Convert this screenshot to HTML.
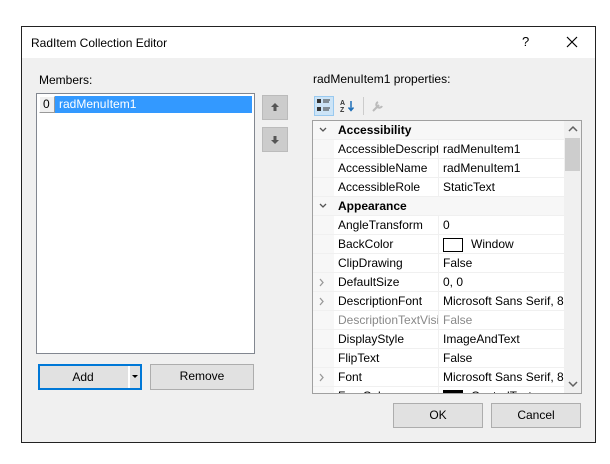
<!DOCTYPE html>
<html><head><style>
*{margin:0;padding:0;box-sizing:border-box}
body{width:610px;height:464px;background:#fff;position:relative;font-family:"Liberation Sans",sans-serif;font-size:12px;color:#000;overflow:hidden}
.a{position:absolute}
.dlg{left:21px;top:26px;width:575px;height:417px;border:1px solid #222;background:#f0f0f0}
.tb{left:0;top:0;width:573px;height:31px;background:#fff}
.btn{position:absolute;background:#e1e1e1;border:1px solid #adadad;text-align:center;line-height:23px}
.row{position:absolute;left:0;width:251px;height:19px;line-height:18px;border-bottom:1px solid #f0f0f0}
.nm{position:absolute;left:21px;width:105px;height:19px;padding-left:4px;border-right:1px solid #f0f0f0;white-space:nowrap;overflow:hidden}
.vl{position:absolute;left:126px;width:125px;padding-left:4px;white-space:nowrap;overflow:hidden}
.cat{background:#f7f7f7;font-weight:bold}
.chev{position:absolute;left:5px;top:5px}
</style></head><body>
<div class="a dlg">
 <div class="a tb"></div>
 <div class="a" style="left:9px;top:9px;font-size:12px">RadItem Collection Editor</div>
 <div class="a" style="left:500px;top:7px;font-size:13px">?</div>
 <svg class="a" style="left:544px;top:9px" width="12" height="12"><path d="M1 1L11 11M11 1L1 11" stroke="#000" stroke-width="1.2"/></svg>
 <div class="a" style="left:17px;top:46px">Members:</div>
 <div class="a" style="left:14px;top:66px;width:219px;height:261px;background:#fff;border:1px solid #828790"></div>
 <div class="a" style="left:17px;top:69px;width:16px;height:17px;background:#f0f0f0;border:1px solid #999;border-top-color:#fff;border-left-color:#fff;line-height:15px;padding-left:3px">0</div>
 <div class="a" style="left:33px;top:69px;width:197px;height:17px;background:#3399ff;color:#fff;line-height:16px;padding-left:4px">radMenuItem1</div>
 <div class="a" style="left:240px;top:68px;width:26px;height:25px;background:#ccc;border:1px solid #bbb"><svg width="24" height="23"><path d="M12 7L8 11H10.5V15H13.5V11H16Z" fill="#555"/></svg></div>
 <div class="a" style="left:240px;top:100px;width:26px;height:25px;background:#ccc;border:1px solid #bbb"><svg width="24" height="23"><path d="M12 16L8 12H10.5V8H13.5V12H16Z" fill="#555"/></svg></div>
 <div class="btn" style="left:16px;top:337px;width:104px;height:26px;border:2px solid #0078d7;line-height:22px;padding-right:14px">Add<div class="a" style="left:88px;top:0;width:2px;height:22px;background:#fff"></div><div class="a" style="left:92px;top:9px;width:0;height:0;border:3px solid transparent;border-top:3px solid #000"></div></div>
 <div class="btn" style="left:128px;top:337px;width:104px;height:26px">Remove</div>
 <div class="a" style="left:291px;top:45px">radMenuItem1 properties:</div>
 <div class="a" style="left:292px;top:69px;width:20px;height:20px;background:#cce4f7;border:1px solid #99c9ef"></div>
 <svg class="a" style="left:295px;top:72px" width="14" height="14"><rect x="0" y="0" width="4" height="4" fill="#333"/><rect x="0" y="8" width="4" height="4" fill="#333"/><path d="M6 1H13M6 3H12M6 9H13M6 11H12" stroke="#333"/></svg>
 <svg class="a" style="left:318px;top:72px" width="16" height="14"><text x="0" y="6" font-size="7" font-family="Liberation Sans" font-weight="bold" fill="#333">A</text><text x="0" y="13" font-size="7" font-family="Liberation Sans" font-weight="bold" fill="#333">Z</text><path d="M11 2V11M8.5 8.5L11 11.5L13.5 8.5" stroke="#1e6fb8" stroke-width="1.5" fill="none"/></svg>
 <div class="a" style="left:341px;top:70px;width:1px;height:18px;background:#ccc"></div>
 <svg class="a" style="left:349px;top:72px" width="14" height="14"><path d="M2 12L8 6M7 3A3 3 0 1 0 11 7" stroke="#bbb" stroke-width="2" fill="none"/></svg>
 <div class="a" style="left:290px;top:93px;width:270px;height:274px;background:#fff;border:1px solid #a0a0a0;overflow:hidden">
  <div class="a" style="left:0;top:0;width:21px;height:274px;background:#f7f7f7"></div>
  <div class="row cat" style="top:0"><svg class="chev" width="10" height="8"><path d="M2 2L5 5L8 2" stroke="#555" stroke-width="1.3" fill="none"/></svg><span class="a" style="left:25px">Accessibility</span></div>
  <div class="row" style="top:19px"><div class="nm">AccessibleDescription</div><div class="vl">radMenuItem1</div></div>
  <div class="row" style="top:38px"><div class="nm">AccessibleName</div><div class="vl">radMenuItem1</div></div>
  <div class="row" style="top:57px"><div class="nm">AccessibleRole</div><div class="vl">StaticText</div></div>
  <div class="row cat" style="top:76px"><svg class="chev" width="10" height="8"><path d="M2 2L5 5L8 2" stroke="#555" stroke-width="1.3" fill="none"/></svg><span class="a" style="left:25px">Appearance</span></div>
  <div class="row" style="top:95px"><div class="nm">AngleTransform</div><div class="vl">0</div></div>
  <div class="row" style="top:114px"><div class="nm">BackColor</div><div class="vl"><span style="display:inline-block;width:20px;height:14px;border:1px solid #000;vertical-align:middle;margin-right:8px"></span>Window</div></div>
  <div class="row" style="top:133px"><div class="nm">ClipDrawing</div><div class="vl">False</div></div>
  <div class="row" style="top:152px"><svg class="chev" width="8" height="10"><path d="M2 1L5 4.5L2 8" stroke="#999" stroke-width="1.3" fill="none"/></svg><div class="nm">DefaultSize</div><div class="vl">0, 0</div></div>
  <div class="row" style="top:171px"><svg class="chev" width="8" height="10"><path d="M2 1L5 4.5L2 8" stroke="#999" stroke-width="1.3" fill="none"/></svg><div class="nm">DescriptionFont</div><div class="vl">Microsoft Sans Serif, 8.25pt</div></div>
  <div class="row" style="top:190px;color:#888"><div class="nm">DescriptionTextVisible</div><div class="vl">False</div></div>
  <div class="row" style="top:209px"><div class="nm">DisplayStyle</div><div class="vl">ImageAndText</div></div>
  <div class="row" style="top:228px"><div class="nm">FlipText</div><div class="vl">False</div></div>
  <div class="row" style="top:247px"><svg class="chev" width="8" height="10"><path d="M2 1L5 4.5L2 8" stroke="#999" stroke-width="1.3" fill="none"/></svg><div class="nm">Font</div><div class="vl">Microsoft Sans Serif, 8.25pt</div></div>
  <div class="row" style="top:266px"><div class="nm">ForeColor</div><div class="vl"><span style="display:inline-block;width:20px;height:14px;background:#000;vertical-align:middle;margin-right:8px"></span>ControlText</div></div>
  <div class="a" style="left:251px;top:0;width:17px;height:272px;background:#f0f0f0"></div>
  <div class="a" style="left:252px;top:17px;width:15px;height:33px;background:#cdcdcd"></div>
  <svg class="a" style="left:254px;top:4px" width="12" height="8"><path d="M2 6L6 2L10 6" stroke="#606060" stroke-width="1.5" fill="none"/></svg>
  <svg class="a" style="left:254px;top:259px" width="12" height="8"><path d="M2 2L6 6L10 2" stroke="#606060" stroke-width="1.5" fill="none"/></svg>
 </div>
 <div class="btn" style="left:371px;top:376px;width:90px;height:25px">OK</div>
 <div class="btn" style="left:469px;top:376px;width:90px;height:25px">Cancel</div>
</div>
</body></html>
